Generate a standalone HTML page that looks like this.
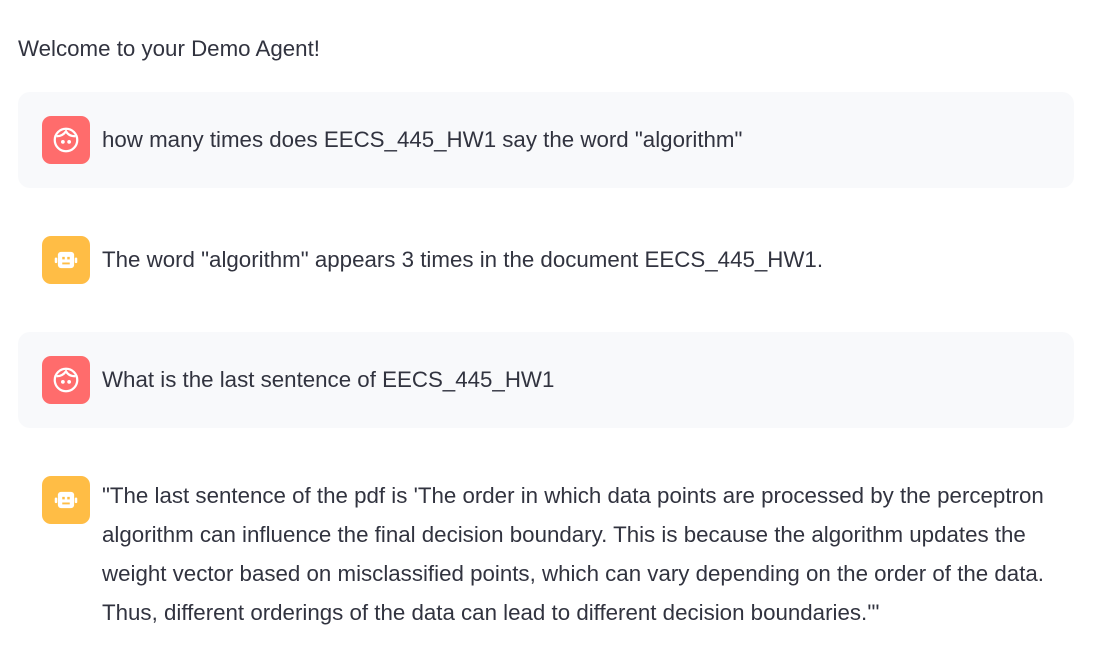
<!DOCTYPE html>
<html><head><style>
body{margin:0;background:#fff;font-family:"Liberation Sans",sans-serif;color:#31333f;width:1105px;height:654px;overflow:hidden;position:relative}
.t{position:absolute;font-size:22.3px;white-space:nowrap}
.box{position:absolute;left:18px;width:1056px;height:96px;background:#f8f9fb;border-radius:12px}
.av{position:absolute;left:42px;width:48px;height:48px;border-radius:9px;display:flex;align-items:center;justify-content:center}
.u{background:#ff6c6c}.b{background:#ffbd45}
</style></head><body>
<div class="t" style="left:18px;top:36px">Welcome to your Demo Agent!</div>
<div class="box" style="top:92px"></div>
<div class="box" style="top:332px"></div>

<div class="av u" style="top:116px"><svg width="30" height="30" viewBox="0 0 24 24" fill="none" stroke="#fff" stroke-width="1.8"><circle cx="12" cy="12" r="9"/><path d="M4.5 9c3 0 5.5-1 7.5-4 1.5 3 4.5 4 7.5 4"/><circle cx="9.5" cy="13.5" r=".6" fill="#fff"/><circle cx="14.5" cy="13.5" r=".6" fill="#fff"/></svg></div>
<div class="t" style="left:102px;top:127px">how many times does EECS_445_HW1 say the word "algorithm"</div>

<div class="av b" style="top:236px"><svg width="30" height="30" viewBox="0 0 24 24" fill="#fff"><rect x="5.5" y="5.5" width="13" height="13" rx="2.5"/><rect x="3" y="10" width="2" height="4.5" rx="1"/><rect x="19" y="10" width="2" height="4.5" rx="1"/><rect x="9" y="9.5" width="2" height="2" fill="#ffbd45"/><rect x="13" y="9.5" width="2" height="2" fill="#ffbd45"/><rect x="9" y="14" width="6" height="1.5" fill="#ffbd45"/></svg></div>
<div class="t" style="left:102px;top:247px">The word "algorithm" appears 3 times in the document EECS_445_HW1.</div>

<div class="av u" style="top:356px"><svg width="30" height="30" viewBox="0 0 24 24" fill="none" stroke="#fff" stroke-width="1.8"><circle cx="12" cy="12" r="9"/><path d="M4.5 9c3 0 5.5-1 7.5-4 1.5 3 4.5 4 7.5 4"/><circle cx="9.5" cy="13.5" r=".6" fill="#fff"/><circle cx="14.5" cy="13.5" r=".6" fill="#fff"/></svg></div>
<div class="t" style="left:102px;top:367px">What is the last sentence of EECS_445_HW1</div>

<div class="av b" style="top:476px"><svg width="30" height="30" viewBox="0 0 24 24" fill="#fff"><rect x="5.5" y="5.5" width="13" height="13" rx="2.5"/><rect x="3" y="10" width="2" height="4.5" rx="1"/><rect x="19" y="10" width="2" height="4.5" rx="1"/><rect x="9" y="9.5" width="2" height="2" fill="#ffbd45"/><rect x="13" y="9.5" width="2" height="2" fill="#ffbd45"/><rect x="9" y="14" width="6" height="1.5" fill="#ffbd45"/></svg></div>
<div class="t" style="left:102px;top:476px;line-height:39px">"The last sentence of the pdf is 'The order in which data points are processed by the perceptron<br>algorithm can influence the final decision boundary. This is because the algorithm updates the<br>weight vector based on misclassified points, which can vary depending on the order of the data.<br>Thus, different orderings of the data can lead to different decision boundaries.'"</div>
</body></html>
